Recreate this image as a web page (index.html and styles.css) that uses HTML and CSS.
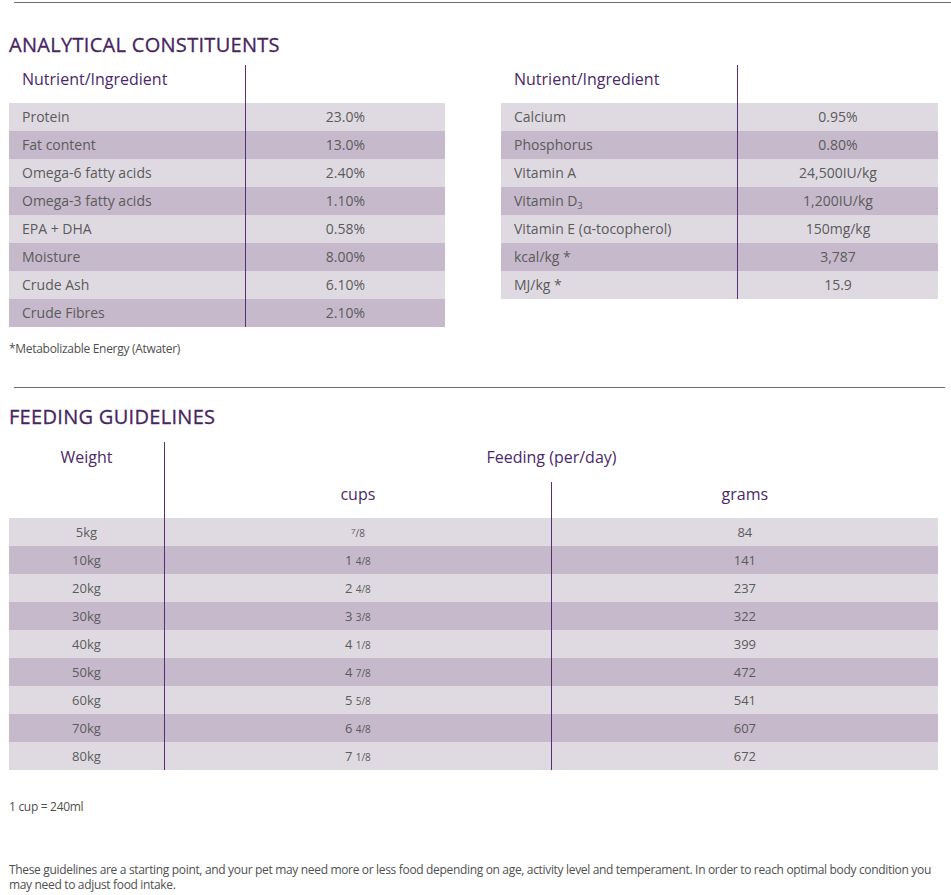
FILE: index.html
```html
<!DOCTYPE html>
<html>
<head>
<meta charset="utf-8">
<link rel="stylesheet" href="styles.css">
</head>
<body>
<div class="page">
  <hr class="rule rule-top">
  <h2 class="title title-analytical">ANALYTICAL CONSTITUENTS</h2>
  <div class="nutri-wrap">
    <table class="nutri">
      <thead><tr><th class="name">Nutrient/Ingredient</th><th class="val"></th></tr></thead>
      <tbody>
        <tr><td class="name">Protein</td><td class="val">23.0%</td></tr>
        <tr><td class="name">Fat content</td><td class="val">13.0%</td></tr>
        <tr><td class="name">Omega-6 fatty acids</td><td class="val">2.40%</td></tr>
        <tr><td class="name">Omega-3 fatty acids</td><td class="val">1.10%</td></tr>
        <tr><td class="name">EPA + DHA</td><td class="val">0.58%</td></tr>
        <tr><td class="name">Moisture</td><td class="val">8.00%</td></tr>
        <tr><td class="name">Crude Ash</td><td class="val">6.10%</td></tr>
        <tr><td class="name">Crude Fibres</td><td class="val">2.10%</td></tr>
      </tbody>
    </table>
    <table class="nutri">
      <thead><tr><th class="name">Nutrient/Ingredient</th><th class="val"></th></tr></thead>
      <tbody>
        <tr><td class="name">Calcium</td><td class="val">0.95%</td></tr>
        <tr><td class="name">Phosphorus</td><td class="val">0.80%</td></tr>
        <tr><td class="name">Vitamin A</td><td class="val">24,500IU/kg</td></tr>
        <tr><td class="name">Vitamin D<sub>3</sub></td><td class="val">1,200IU/kg</td></tr>
        <tr><td class="name">Vitamin E (α-tocopherol)</td><td class="val">150mg/kg</td></tr>
        <tr><td class="name">kcal/kg *</td><td class="val">3,787</td></tr>
        <tr><td class="name">MJ/kg *</td><td class="val">15.9</td></tr>
      </tbody>
    </table>
  </div>
  <p class="note note-energy">*Metabolizable Energy (Atwater)</p>
  <hr class="rule rule-mid">
  <h2 class="title title-feeding">FEEDING GUIDELINES</h2>
  <table class="feed">
    <thead>
      <tr class="h1"><th class="w" rowspan="2">Weight</th><th class="fd" colspan="2">Feeding (per/day)</th></tr>
      <tr class="h2"><th class="cups">cups</th><th class="grams">grams</th></tr>
    </thead>
    <tbody>
      <tr><td class="w">5kg</td><td class="cups"><span class="fr"><sup>7</sup>/8</span></td><td class="grams">84</td></tr>
      <tr><td class="w">10kg</td><td class="cups">1 <span class="fr">4/8</span></td><td class="grams">141</td></tr>
      <tr><td class="w">20kg</td><td class="cups">2 <span class="fr">4/8</span></td><td class="grams">237</td></tr>
      <tr><td class="w">30kg</td><td class="cups">3 <span class="fr">3/8</span></td><td class="grams">322</td></tr>
      <tr><td class="w">40kg</td><td class="cups">4 <span class="fr">1/8</span></td><td class="grams">399</td></tr>
      <tr><td class="w">50kg</td><td class="cups">4 <span class="fr">7/8</span></td><td class="grams">472</td></tr>
      <tr><td class="w">60kg</td><td class="cups">5 <span class="fr">5/8</span></td><td class="grams">541</td></tr>
      <tr><td class="w">70kg</td><td class="cups">6 <span class="fr">4/8</span></td><td class="grams">607</td></tr>
      <tr><td class="w">80kg</td><td class="cups">7 <span class="fr">1/8</span></td><td class="grams">672</td></tr>
    </tbody>
  </table>
  <p class="note note-cup">1 cup = 240ml</p>
  <p class="note note-guide">These guidelines are a starting point, and your pet may need more or less food depending on age, activity level and temperament. In order to reach optimal body condition you may need to adjust food intake.</p>
</div>
</body>
</html>
```
FILE: styles.css
```css
html, body {
  margin: 0;
  padding: 0;
  background: #ffffff;
}
body {
  font-family: "Open Sans", "Noto Sans", sans-serif;
  color: #5b5b5b;
}
.page {
  padding: 0 13px 0 9px;
}
.rule {
  border: 0;
  height: 1px;
  background: #6e6e6e;
  margin: 0;
}
.rule-top {
  margin: 2px -13px 0 5px;
}
.rule-mid {
  margin: 0 -7px 0 5px;
}
.title {
  margin: 0;
  font-weight: 400;
  color: #47255f;
  font-size: 20px;
  letter-spacing: 0.3px;
  line-height: 24px;
  -webkit-text-stroke: 0.3px #47255f;
}
.title-analytical {
  padding-top: 30px;
  height: 32px;
}
.title-feeding {
  padding-top: 17px;
  height: 37px;
}
.nutri-wrap {
  display: flex;
  align-items: flex-start;
  gap: 56px;
}
.nutri {
  border-collapse: collapse;
  width: 437px;
  table-layout: fixed;
}
.nutri:first-child {
  width: 436px;
}
.nutri th {
  height: 38px;
  padding: 0 0 0 13px;
  font-weight: 400;
  font-size: 16px;
  color: #4a2968;
  text-align: left;
  vertical-align: top;
  line-height: 28px;
}
.nutri th.val,
.nutri td.val {
  border-left: 1px solid #5a2e74;
}
.nutri th.name,
.nutri td.name {
  width: 223px;
}
.nutri td {
  height: 28px;
  padding: 0;
  font-size: 14px;
  line-height: 28px;
}
.nutri td.name {
  padding-left: 13px;
}
.nutri td.val {
  text-align: center;
}
.nutri tbody tr:nth-child(odd) td,
.feed tbody tr:nth-child(odd) td {
  background: #dfdae2;
}
.nutri tbody tr:nth-child(even) td,
.feed tbody tr:nth-child(even) td {
  background: #c6b9cb;
}
sub {
  font-size: 9px;
  vertical-align: -3px;
  line-height: 0;
}
.note {
  margin: 0;
  font-size: 12px;
  letter-spacing: -0.3px;
  color: #4f4f4f;
}
.note-energy {
  padding-top: 14px;
  height: 46px;
  line-height: 16px;
}
.feed {
  border-collapse: collapse;
  width: 929px;
  table-layout: fixed;
}
.feed th {
  font-weight: 400;
  color: #4a2968;
  font-size: 16px;
  padding: 0;
}
.feed .h1 th {
  height: 37px;
}
.feed .h2 th {
  height: 36px;
  vertical-align: top;
  line-height: 24px;
  padding-top: 0;
}
.feed th.w {
  width: 155px;
  vertical-align: top;
  padding-top: 3px;
  line-height: 24px;
}
.feed th.fd {
  line-height: 24px;
  padding-top: 3px;
  vertical-align: top;
  border-left: 1px solid #5a2e74;
}
.feed th.cups {
  width: 386px;
  border-left: 1px solid #5a2e74;
}
.feed th.grams {
  border-left: 1px solid #5a2e74;
}
.feed td {
  height: 28px;
  padding: 0;
  text-align: center;
  font-size: 13px;
  line-height: 28px;
}
.feed td.cups,
.feed td.grams {
  border-left: 1px solid #5a2e74;
}
.fr {
  font-size: 10px;
  line-height: 0;
}
.fr sup {
  font-size: 8px;
  vertical-align: 3px;
  line-height: 0;
}
.note-cup {
  padding-top: 29px;
  height: 63px;
  line-height: 16px;
}
.note-guide {
  line-height: 15px;
  letter-spacing: -0.33px;
}
```
